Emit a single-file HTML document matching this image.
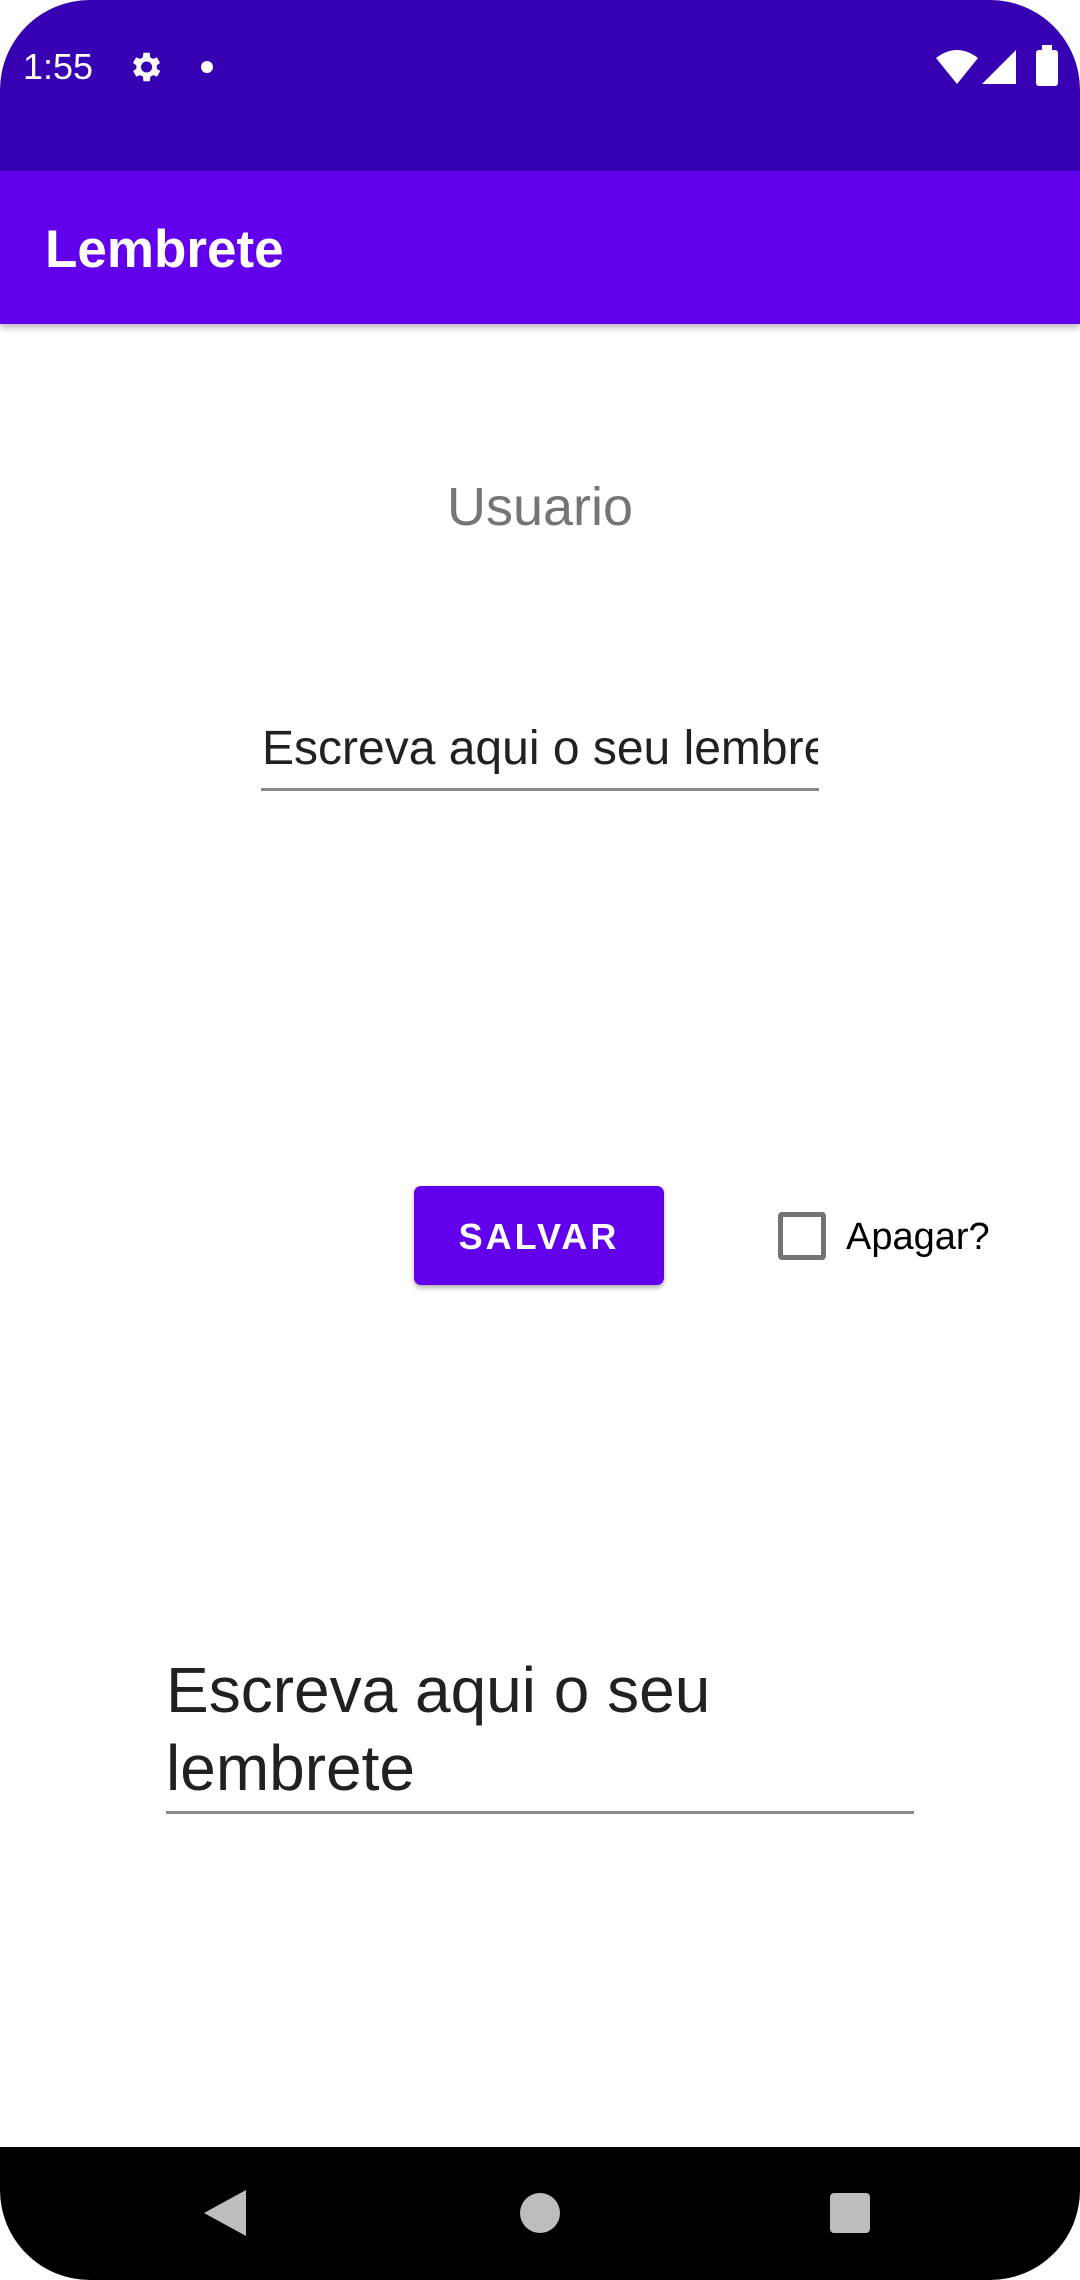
<!DOCTYPE html>
<html><head><meta charset="utf-8"><style>
*{margin:0;padding:0;box-sizing:border-box}
body{width:1080px;height:2280px;background:#fff;font-family:"Liberation Sans",Roboto,sans-serif;overflow:hidden;position:relative}
.screen{position:absolute;left:0;top:0;width:1080px;height:2147px;background:#fff;border-radius:90px 90px 0 0;overflow:hidden}
.status{position:absolute;left:0;top:0;width:1080px;height:171px;background:#3700b3}
.appbar{position:absolute;left:0;top:171px;width:1080px;height:153px;background:#6200ee;box-shadow:0 4px 6px rgba(0,0,0,.25)}
.abs{position:absolute}
</style></head><body>
<div class="screen">
<div class="status">
 <div class="abs" style="left:23px;top:46px;color:#fff;font-size:36px">1:55</div>
 <svg class="abs" style="left:126px;top:48px" width="38" height="38" viewBox="0 0 24 24"><path fill="#fff" d="M19.4 13a7.5 7.5 0 000-2l2.1-1.6-2-3.5-2.5 1a7 7 0 00-1.7-1L15 3h-4l-.4 2.9a7 7 0 00-1.7 1l-2.5-1-2 3.5L6.6 11a7.5 7.5 0 000 2l-2.1 1.6 2 3.5 2.5-1a7 7 0 001.7 1L11 21h4l.4-2.9a7 7 0 001.7-1l2.5 1 2-3.5zM13 15.5a3.5 3.5 0 110-7 3.5 3.5 0 010 7z"/></svg>
 <div class="abs" style="left:201px;top:61px;width:12px;height:12px;border-radius:50%;background:#fff"></div>
 <svg class="abs" style="left:936px;top:50px" width="42" height="34" viewBox="0 0 42 34"><path fill="#fff" d="M0 8Q21-8 42 8L21 34Z"/></svg>
 <svg class="abs" style="left:982px;top:50px" width="34" height="34" viewBox="0 0 34 34"><path fill="#fff" d="M34 0V34H0Z"/></svg>
 <div class="abs" style="left:1036px;top:50px;width:22px;height:36px;background:#fff;border-radius:3px"></div>
 <div class="abs" style="left:1042px;top:45px;width:10px;height:6px;background:#fff"></div>
</div>
<div class="appbar"><div class="abs" style="left:45px;top:48px;color:#fff;font-size:53px;font-weight:bold">Lembrete</div></div>
<div class="abs" style="left:0;width:1080px;top:476px;text-align:center;color:#757575;font-size:54px">Usuario</div>
<div class="abs" style="left:262px;top:721px;width:556px;overflow:hidden;white-space:nowrap;color:#212121;font-size:48px">Escreva aqui o seu lembrete</div>
<div class="abs" style="left:261px;top:788px;width:558px;height:3px;background:#8a8a8a"></div>
<div class="abs" style="left:414px;top:1186px;width:250px;height:99px;background:#6200ee;border-radius:7px;box-shadow:0 3px 5px rgba(0,0,0,.3);color:#fff;font-size:36px;font-weight:bold;letter-spacing:3px;text-align:center;line-height:101px">SALVAR</div>
<div class="abs" style="left:778px;top:1212px;width:48px;height:48px;border:5px solid #737373;border-radius:4px"></div>
<div class="abs" style="left:846px;top:1216px;color:#000;font-size:38px">Apagar?</div>
<div class="abs" style="left:166px;top:1651px;width:760px;color:#212121;font-size:64px;line-height:78px">Escreva aqui o seu<br>lembrete</div>
<div class="abs" style="left:166px;top:1811px;width:748px;height:3px;background:#8a8a8a"></div>
</div>
<div class="abs" style="left:0;top:2147px;width:1080px;height:133px;background:#000;border-radius:0 0 90px 90px"></div>
<svg class="abs" style="left:204px;top:2190px" width="42" height="46" viewBox="0 0 42 46"><path fill="#bdbdbd" d="M42 0V46L0 23Z"/></svg>
<div class="abs" style="left:520px;top:2193px;width:40px;height:40px;border-radius:50%;background:#bdbdbd"></div>
<div class="abs" style="left:830px;top:2193px;width:40px;height:40px;border-radius:4px;background:#bdbdbd"></div>
</body></html>
